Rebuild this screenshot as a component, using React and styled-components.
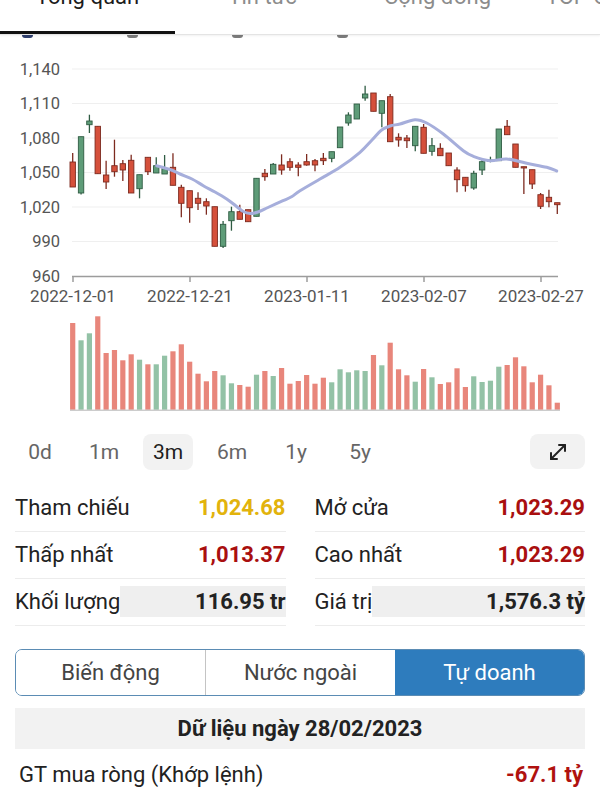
import React from 'react';
import styled, { createGlobalStyle } from 'styled-components';
import { MoveDiagonal } from 'lucide-react';

const GlobalStyle = createGlobalStyle`
  html, body { margin: 0; padding: 0; background: #fff; }
  body {
    font-family: Roboto, "Noto Sans", "Liberation Sans", sans-serif;
    color: #222;
    width: 600px;
    height: 800px;
    overflow: hidden;
  }
  * { box-sizing: border-box; }
`;

const Page = styled.div`
  width: 600px;
  height: 800px;
  display: flex;
  flex-direction: column;
  background: #fff;
`;

const TabBar = styled.div`
  display: flex;
  height: 36px;
  overflow: hidden;
  border-bottom: 1px solid #e4e4e4;
  box-shadow: 0 1px 2px rgba(0, 0, 0, 0.06);
  background: #fff;
  position: relative;
  z-index: 1;
`;

const Tab = styled.div`
  flex: 0 0 175px;
  display: flex;
  justify-content: center;
  font-size: 22px;
  line-height: 22px;
  white-space: nowrap;
  color: ${(p) => (p.$active ? '#1c1c1c' : '#8c8c8c')};
  border-bottom: 3px solid ${(p) => (p.$active ? '#111' : 'transparent')};
`;

const TabLabel = styled.span`
  margin-top: -14px;
`;

const DotsRow = styled.div`
  height: 4px;
  display: flex;
  gap: 94px;
  padding-left: 22px;
`;

const Dot = styled.div`
  width: 11px;
  height: 3px;
  border-radius: 0 0 6px 6px;
  background: ${(p) => (p.$primary ? '#2f3f6e' : '#7c7c7c')};
`;

const ChartSvg = styled.svg`
  display: block;
  width: 600px;
  height: 380px;
  flex: none;
`;

const PeriodRow = styled.div`
  margin-top: 15px;
  padding: 0 15px;
  display: flex;
  align-items: center;
  gap: 14px;
  height: 36px;
`;

const PeriodButton = styled.div`
  width: 50px;
  height: 36px;
  border-radius: 8px;
  display: flex;
  align-items: center;
  justify-content: center;
  font-size: 21px;
  color: ${(p) => (p.$active ? '#1e1e1e' : '#666')};
  background: ${(p) => (p.$active ? '#f2f2f2' : 'transparent')};
`;

const ExpandButton = styled.div`
  margin-left: auto;
  width: 55px;
  height: 35px;
  border-radius: 8px;
  background: #f2f2f2;
  display: flex;
  align-items: center;
  justify-content: center;
  color: #222;
`;

const StatsGrid = styled.div`
  margin-top: 15px;
  padding: 0 15px;
  display: grid;
  grid-template-columns: 1fr 1fr;
  column-gap: 29px;
`;

const StatRow = styled.div`
  height: 47px;
  display: flex;
  align-items: center;
  border-bottom: 1px solid #ececec;
`;

const StatLabel = styled.div`
  font-size: 22px;
  color: #222;
  white-space: nowrap;
`;

const StatValue = styled.div`
  flex: 1;
  height: 31px;
  display: flex;
  align-items: center;
  justify-content: flex-end;
  font-size: 22px;
  font-weight: 700;
  white-space: nowrap;
  color: ${(p) => p.$color || '#222'};
  background: ${(p) => (p.$shaded ? '#efefef' : 'transparent')};
`;

const Segmented = styled.div`
  margin: 23px 15px 0;
  height: 48px;
  display: flex;
  border: 1.5px solid #5b8cb4;
  border-radius: 7px;
  overflow: hidden;
`;

const Segment = styled.div`
  flex: 1;
  display: flex;
  align-items: center;
  justify-content: center;
  font-size: 22px;
  color: ${(p) => (p.$active ? '#fff' : '#444')};
  background: ${(p) => (p.$active ? '#2e7cbd' : '#fff')};
  border-left: ${(p) => (p.$divider ? '1px solid #c4c4c4' : 'none')};
`;

const DataHeader = styled.div`
  margin: 12px 15px 0;
  height: 43px;
  background: #f2f2f2;
  display: flex;
  align-items: center;
  justify-content: center;
  font-size: 22px;
  font-weight: 700;
  color: #222;
`;

const InfoRow = styled.div`
  height: 52px;
  padding: 0 17px 0 19px;
  display: flex;
  align-items: center;
  justify-content: space-between;
  font-size: 22px;
`;

const InfoValue = styled.span`
  font-weight: 700;
  color: #b0120f;
`;

// [bodyTop, bodyBottom, wickTop, wickBottom, up]
const CANDLES = [
  [163, 188, 154, 188, 0],
  [137.7, 194, 137.7, 195.5, 1],
  [122, 125.7, 115.7, 134, 1],
  [127.3, 174.7, 127.3, 174.7, 0],
  [176, 183, 161.7, 190, 0],
  [166.7, 172.7, 140.7, 177.7, 0],
  [164.7, 171, 161, 182, 0],
  [161.3, 194, 155.7, 194, 0],
  [175.7, 189.7, 175.7, 199.3, 1],
  [158.3, 172.7, 158.3, 176, 0],
  [166.7, 174, 158.3, 174, 1],
  [169.7, 175, 156, 175, 1],
  [168.3, 186.3, 154.3, 186.3, 0],
  [188.3, 204.3, 185.7, 218.3, 0],
  [191.7, 208.7, 191.7, 223.7, 0],
  [199.3, 204.3, 193.3, 211, 0],
  [202.7, 207, 199.3, 215.7, 0],
  [207.7, 247.3, 207.7, 247.3, 0],
  [225.3, 247.3, 222, 249, 1],
  [212.7, 221.7, 207.7, 231.7, 1],
  [212.7, 220.3, 205.7, 220.3, 0],
  [210.7, 222.7, 210.7, 222.7, 0],
  [179.3, 217.3, 179.3, 217.3, 1],
  [174.3, 177.7, 170, 181.7, 0],
  [165.3, 175, 164, 175, 1],
  [166, 171, 155.3, 175.7, 0],
  [162.7, 168.3, 159.3, 171.7, 0],
  [166, 168.3, 163.3, 177.3, 0],
  [162.7, 166, 155, 166.7, 0],
  [161.7, 166, 160, 172.3, 0],
  [159.3, 161.7, 154, 166, 0],
  [152.7, 159.3, 152.7, 163.3, 1],
  [128, 148.7, 128, 148.7, 1],
  [116, 124, 113.3, 126.7, 1],
  [105, 120, 105, 120, 1],
  [95, 99, 86.7, 101.7, 1],
  [94, 112.3, 94, 112.3, 0],
  [101.7, 114.3, 101.7, 128.3, 1],
  [97.7, 142.7, 95, 142.7, 0],
  [138.3, 141, 134.3, 147.7, 0],
  [139, 141.7, 136, 149, 0],
  [127.3, 146.7, 127.3, 152.3, 1],
  [128.3, 154.3, 125, 154.3, 0],
  [146.7, 152.3, 139, 156.7, 1],
  [149.3, 156.7, 144.3, 156.7, 0],
  [154, 166.7, 154, 166.7, 0],
  [171, 180.7, 168.3, 193.3, 0],
  [178.3, 186.7, 178.3, 192.7, 0],
  [174.3, 189, 171.7, 190.7, 1],
  [162.7, 171, 160, 176, 1],
  [161, 162.5, 157.7, 163.3, 1],
  [130, 161.7, 130, 161.7, 1],
  [127.3, 135.7, 121, 135.7, 0],
  [145, 168.3, 145, 168.3, 0],
  [167.7, 169, 167.7, 195, 0],
  [170.7, 185, 170.7, 190, 0],
  [195.7, 207.3, 194, 210, 0],
  [198.3, 202.7, 190.7, 208.3, 0],
  [203.7, 205.7, 203.7, 215, 0],
];

const VOLUME_TOPS = [
  324, 341.3, 334.3, 317.3, 354, 351, 361.3, 355.3, 360.7, 365.3,
  365.3, 356.7, 352.3, 345.3, 362.7, 374.7, 382.3, 372, 376.3, 384.3,
  386, 387.7, 375.7, 372, 377, 369, 384.7, 382, 376, 384.7,
  378.7, 383.3, 370.3, 373.3, 371.3, 372, 356, 366.3, 343.7, 370.3,
  376.3, 382.7, 370, 378.3, 385, 383.3, 369.3, 388, 377.3, 383,
  381.7, 367.7, 366, 358.3, 367.3, 383.3, 375.7, 386.3, 403.7,
];

const MA_POINTS = [
  [156.7, 166.7], [170, 170.5], [180, 175], [192, 180], [203.3, 186.7],
  [215, 193], [226.7, 200], [236, 207], [243.3, 212.5], [250, 214.5],
  [258, 213], [268, 208.5], [283, 201.7], [292, 197.5], [300, 191.7],
  [320, 180], [340, 168.3], [360, 153.3], [372, 141], [381, 131.5],
  [390, 127], [400, 125], [415, 120.7], [426.7, 124], [443.3, 135],
  [463.3, 151.7], [473.3, 157.3], [490, 161.7], [506.7, 160],
  [526.7, 164.3], [546.7, 168.3], [556.7, 172],
];

const smoothPath = (pts) => {
  let d = `M${pts[0][0]},${pts[0][1]}`;
  for (let i = 0; i < pts.length - 1; i++) {
    const p0 = pts[i - 1] || pts[i];
    const p1 = pts[i];
    const p2 = pts[i + 1];
    const p3 = pts[i + 2] || p2;
    const c1x = p1[0] + (p2[0] - p0[0]) / 6;
    const c1y = p1[1] + (p2[1] - p0[1]) / 6;
    const c2x = p2[0] - (p3[0] - p1[0]) / 6;
    const c2y = p2[1] - (p3[1] - p1[1]) / 6;
    d += ` C${c1x.toFixed(1)},${c1y.toFixed(1)} ${c2x.toFixed(1)},${c2y.toFixed(1)} ${p2[0]},${p2[1]}`;
  }
  return d;
};

const Y_TICKS = [1140, 1110, 1080, 1050, 1020, 990, 960];
const X_TICKS = [
  [73, '2022-12-01'],
  [190, '2022-12-21'],
  [307, '2023-01-11'],
  [424, '2023-02-07'],
  [541, '2023-02-27'],
];

const xAt = (i) => 72.7 + i * 8.355;
const yAt = (v) => 277 - (v - 960) * 1.15;

function PriceChart() {
  return (
    <ChartSvg viewBox="0 40 600 380">
      {Y_TICKS.map((v) => (
        <g key={v}>
          {v !== 960 && (
            <line x1="72" x2="558" y1={yAt(v)} y2={yAt(v)} stroke="#efefef" strokeWidth="1" />
          )}
          <text
            x="60"
            y={yAt(v)}
            textAnchor="end"
            dominantBaseline="central"
            fontSize="16.5"
            fill="#555"
            fontFamily="Roboto, sans-serif"
          >
            {v.toLocaleString('en-US')}
          </text>
        </g>
      ))}
      <line x1="72" x2="558" y1="277.5" y2="277.5" stroke="#9c9c9c" strokeWidth="1.5" />
      {X_TICKS.map(([x, label]) => (
        <g key={label}>
          <line x1={x} x2={x} y1="277.5" y2="283" stroke="#9c9c9c" strokeWidth="1.5" />
          <text
            x={x}
            y="297"
            textAnchor="middle"
            dominantBaseline="central"
            fontSize="17"
            fill="#555"
            fontFamily="Roboto, sans-serif"
          >
            {label}
          </text>
        </g>
      ))}
      {CANDLES.map(([bt, bb, wt, wb, up], i) => {
        const x = xAt(i);
        const fill = up ? '#5e9c78' : '#d5503b';
        const stroke = up ? '#2f5c43' : '#7d2a1f';
        return (
          <g key={i}>
            <line x1={x} x2={x} y1={wt} y2={wb} stroke={stroke} strokeWidth="1.3" />
            <rect
              x={x - 2.7}
              y={bt}
              width="5.4"
              height={Math.max(bb - bt, 1.2)}
              fill={fill}
              stroke={stroke}
              strokeWidth="0.9"
            />
          </g>
        );
      })}
      <path
        d={smoothPath(MA_POINTS)}
        fill="none"
        stroke="#a6aedb"
        strokeWidth="3"
        strokeLinecap="round"
        strokeLinejoin="round"
      />
      {VOLUME_TOPS.map((top, i) => {
        const x = xAt(i);
        const up = CANDLES[i][4];
        return (
          <rect
            key={i}
            x={x - 2.6}
            y={top}
            width="5.2"
            height={410.7 - top}
            fill={up ? '#93c2a6' : '#e8867b'}
          />
        );
      })}
      <line x1="70" x2="560" y1="411.2" y2="411.2" stroke="#b5b5b5" strokeWidth="1" />
    </ChartSvg>
  );
}

const PERIODS = ['0d', '1m', '3m', '6m', '1y', '5y'];

const STATS = [
  [
    { label: 'Tham chiếu', value: '1,024.68', color: '#e2b30c' },
    { label: 'Mở cửa', value: '1,023.29', color: '#a90f0f' },
  ],
  [
    { label: 'Thấp nhất', value: '1,013.37', color: '#a90f0f' },
    { label: 'Cao nhất', value: '1,023.29', color: '#a90f0f' },
  ],
  [
    { label: 'Khối lượng', value: '116.95 tr', color: '#222', shaded: true },
    { label: 'Giá trị', value: '1,576.3 tỷ', color: '#222', shaded: true },
  ],
];

export default function App() {
  return (
    <>
      <GlobalStyle />
      <Page>
        <TabBar>
          <Tab $active>
            <TabLabel>Tổng quan</TabLabel>
          </Tab>
          <Tab>
            <TabLabel>Tin tức</TabLabel>
          </Tab>
          <Tab>
            <TabLabel>Cộng đồng</TabLabel>
          </Tab>
          <Tab>
            <TabLabel>TOP Cổ phiếu</TabLabel>
          </Tab>
        </TabBar>
        <DotsRow>
          <Dot $primary />
          <Dot />
          <Dot />
          <Dot />
        </DotsRow>
        <PriceChart />
        <PeriodRow>
          {PERIODS.map((p) => (
            <PeriodButton key={p} $active={p === '3m'}>
              {p}
            </PeriodButton>
          ))}
          <ExpandButton>
            <MoveDiagonal size={24} strokeWidth={2} />
          </ExpandButton>
        </PeriodRow>
        <StatsGrid>
          {STATS.flat().map((s) => (
            <StatRow key={s.label}>
              <StatLabel>{s.label}</StatLabel>
              <StatValue $color={s.color} $shaded={s.shaded}>
                {s.value}
              </StatValue>
            </StatRow>
          ))}
        </StatsGrid>
        <Segmented>
          <Segment>Biến động</Segment>
          <Segment $divider>Nước ngoài</Segment>
          <Segment $active>Tự doanh</Segment>
        </Segmented>
        <DataHeader>Dữ liệu ngày 28/02/2023</DataHeader>
        <InfoRow>
          <span>GT mua ròng (Khớp lệnh)</span>
          <InfoValue>-67.1 tỷ</InfoValue>
        </InfoRow>
      </Page>
    </>
  );
}
